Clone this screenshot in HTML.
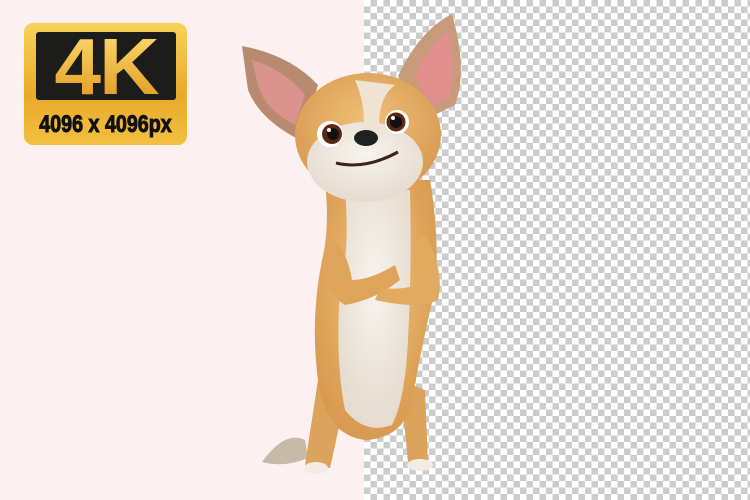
<!DOCTYPE html>
<html><head><style>
html,body{margin:0;padding:0;width:750px;height:500px;overflow:hidden;background:#fdf0f1;}
.wrap{position:relative;width:750px;height:500px;}
.checker{position:absolute;left:364px;top:0;width:386px;height:500px;background-color:#fff;
background-image:linear-gradient(45deg,#cccccc 25%,transparent 25%,transparent 75%,#cccccc 75%),linear-gradient(45deg,#cccccc 25%,transparent 25%,transparent 75%,#cccccc 75%);
background-size:13px 13px;background-position:0 0,6.5px 6.5px;}
.badge{position:absolute;left:24px;top:23px;width:163px;height:122px;border-radius:9px;background:linear-gradient(180deg,#f7d35a,#e9a92a 60%,#f2c040);}
.inner{position:absolute;left:12px;top:9px;width:140px;height:68px;background:#1c1c1a;border-radius:3px;overflow:hidden;}
.k4{position:absolute;left:0;top:2px;width:140px;text-align:center;font:bold 80px/66px "Liberation Sans",sans-serif;letter-spacing:-2px;background:linear-gradient(180deg,#fbd769,#e19d22);-webkit-background-clip:text;background-clip:text;color:transparent;transform:scaleX(1.05);}
.px{position:absolute;left:-10px;top:90px;width:183px;text-align:center;font:bold 24px/24px "Liberation Sans Narrow","Liberation Sans",sans-serif;color:#111;transform:scaleX(0.82);letter-spacing:0px;-webkit-text-stroke:1px #111;}
svg{position:absolute;left:0;top:0;}
</style></head><body><div class="wrap">
<div class="checker"></div>
<div class="badge"><div class="inner"><div class="k4">4K</div></div><div class="px">4096 x 4096px</div></div>
<svg width="750" height="500" viewBox="0 0 750 500">
<defs>
<radialGradient id="fur" cx="50%" cy="40%" r="60%"><stop offset="0" stop-color="#f0c07a"/><stop offset="1" stop-color="#d89a50"/></radialGradient>
<radialGradient id="wh" cx="50%" cy="40%" r="60%"><stop offset="0" stop-color="#f7f3ee"/><stop offset="1" stop-color="#e6dccf"/></radialGradient>
</defs>
<path d="M262 462 Q285 430 305 440 L308 458 Q285 468 262 462Z" fill="#c9b9a8"/>
<path d="M242 46 Q290 55 318 85 L300 140 Q260 120 248 90Z" fill="#b88a70"/>
<path d="M252 60 Q285 70 305 95 L295 125 Q265 110 258 85Z" fill="#d9938c"/>
<path d="M452 14 Q468 70 455 105 L420 122 L398 76 Q420 30 452 14Z" fill="#c79a7a"/>
<path d="M448 30 Q458 72 448 98 L428 108 L415 75 Q430 45 448 30Z" fill="#e08f8c"/>
<path d="M318 380 L305 465 L330 468 L345 400Z" fill="#dca35c"/>
<path d="M400 380 L408 462 L428 464 L425 390Z" fill="#dca35c"/>
<path d="M325 180 Q330 230 322 260 Q310 320 318 380 Q325 435 365 440 Q405 438 412 400 Q425 330 435 290 Q440 240 430 180Z" fill="url(#fur)"/>
<path d="M345 190 Q350 250 340 290 Q335 360 345 410 Q365 435 392 425 Q405 400 408 340 Q412 260 410 190Z" fill="url(#wh)"/>
<path d="M330 240 Q318 290 345 305 Q375 300 400 280 L395 265 Q370 280 352 280 Q348 255 335 240Z" fill="#dda45a"/>
<path d="M425 235 Q445 270 438 300 Q420 310 375 300 L380 288 Q405 290 415 285 Q412 262 418 240Z" fill="#e2aa60"/>
<ellipse cx="368" cy="135" rx="73" ry="62" fill="url(#fur)"/>
<ellipse cx="365" cy="162" rx="58" ry="40" fill="url(#wh)"/>
<path d="M355 80 Q368 110 362 140 L380 140 Q375 100 395 85Z" fill="#efe3d4"/>
<circle cx="330" cy="134" r="13" fill="#fff"/><circle cx="332" cy="134" r="10" fill="#5a2a14"/><circle cx="333" cy="134" r="6" fill="#111"/><circle cx="329" cy="130" r="2" fill="#fff"/>
<circle cx="397" cy="122" r="12" fill="#fff"/><circle cx="396" cy="122" r="9.5" fill="#5a2a14"/><circle cx="396" cy="122" r="6" fill="#111"/><circle cx="393" cy="118" r="2" fill="#fff"/>
<ellipse cx="366" cy="138" rx="12" ry="8" fill="#222"/>
<path d="M336 163 Q365 170 398 152" stroke="#3a2418" stroke-width="3" fill="none"/>
<ellipse cx="316" cy="468" rx="12" ry="6" fill="#f2ece4"/>
<ellipse cx="420" cy="465" rx="13" ry="6" fill="#f2ece4"/>
</svg>
</div></body></html>
